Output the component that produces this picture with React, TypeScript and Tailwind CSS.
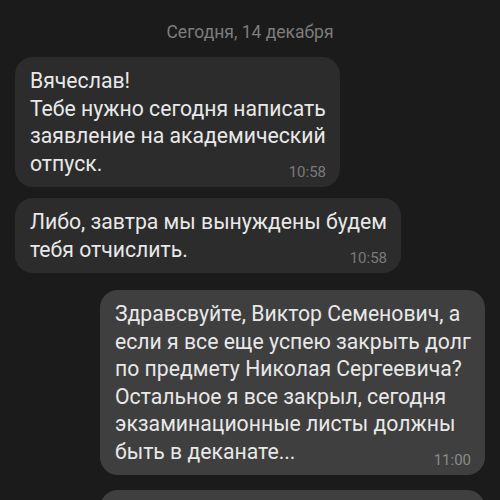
const messages = [
  {
    id: 1,
    out: false,
    width: 'w-[325px]',
    lines: ['Вячеслав!', 'Тебе нужно сегодня написать', 'заявление на академический', 'отпуск.'],
    time: '10:58',
  },
  {
    id: 2,
    out: false,
    width: 'w-[386px]',
    lines: ['Либо, завтра мы вынуждены будем', 'тебя отчислить.'],
    time: '10:58',
  },
  {
    id: 3,
    out: true,
    width: 'w-[385px]',
    lines: [
      'Здравсвуйте, Виктор Семенович, а',
      'если я все еще успею закрыть долг',
      'по предмету Николая Сергеевича?',
      'Остальное я все закрыл, сегодня',
      'экзаминационные листы должны',
      'быть в деканате...',
    ],
    time: '11:00',
  },
];

const Bubble = ({ m }: { m: (typeof messages)[number] }) => (
  <div
    className={`relative ${m.width} rounded-[18px] px-[15px] py-[10px] ${
      m.out ? 'self-end bg-[#3f3f3f]' : 'self-start bg-[#2c2c2c]'
    }`}
  >
    <p className="text-[21.2px] leading-[27.5px] text-[#e8e8e8]">
      {m.lines.map((line, i) => (
        <span key={i} className="block whitespace-nowrap">
          {line}
        </span>
      ))}
    </p>
    <span
      className={`absolute right-[14px] bottom-[7px] text-[15px] leading-4 ${
        m.out ? 'text-[#8a8a8a]' : 'text-[#7a7a7a]'
      }`}
    >
      {m.time}
    </span>
  </div>
);

export default function App() {
  return (
    <div
      className="flex h-[500px] w-[500px] flex-col overflow-hidden bg-[#1b1b1b] pl-[15px] pr-[15px]"
      style={{ fontFamily: 'Roboto, "Noto Sans", sans-serif' }}
    >
      <p className="mt-[21px] mb-[14px] text-center text-[17.5px] leading-[22px] text-[#7d7d7d]">
        Сегодня, 14 декабря
      </p>
      <div className="flex flex-col">
        <Bubble m={messages[0]} />
        <div className="h-[11px] shrink-0" />
        <Bubble m={messages[1]} />
        <div className="h-[17px] shrink-0" />
        <Bubble m={messages[2]} />
        <div className="h-[15px] shrink-0" />
        <div className="h-[60px] w-[385px] shrink-0 self-end rounded-[18px] bg-[#3f3f3f]" />
      </div>
    </div>
  );
}
